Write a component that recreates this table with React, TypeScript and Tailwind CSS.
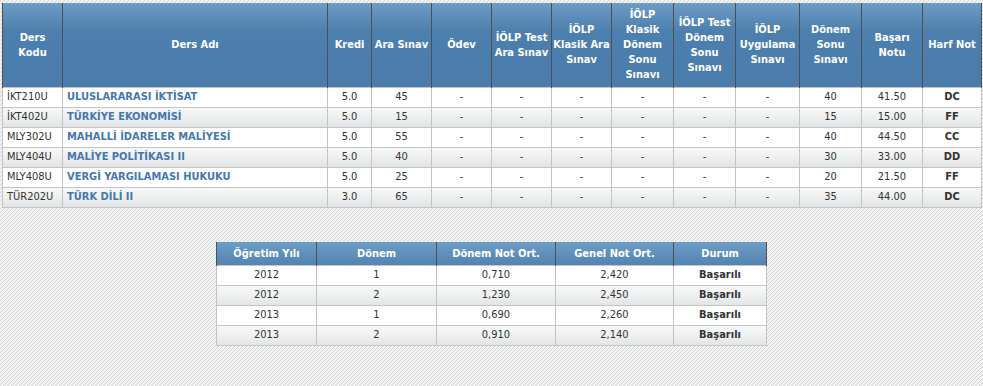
import React from 'react';

const courses = [
  ['İKT210U', 'ULUSLARARASI İKTİSAT', '5.0', '45', '40', '41.50', 'DC'],
  ['İKT402U', 'TÜRKİYE EKONOMİSİ', '5.0', '15', '15', '15.00', 'FF'],
  ['MLY302U', 'MAHALLİ İDARELER MALİYESİ', '5.0', '55', '40', '44.50', 'CC'],
  ['MLY404U', 'MALİYE POLİTİKASI II', '5.0', '40', '30', '33.00', 'DD'],
  ['MLY408U', 'VERGİ YARGILAMASI HUKUKU', '5.0', '25', '20', '21.50', 'FF'],
  ['TÜR202U', 'TÜRK DİLİ II', '3.0', '65', '35', '44.00', 'DC'],
];

const terms = [
  ['2012', '1', '0,710', '2,420'],
  ['2012', '2', '1,230', '2,450'],
  ['2013', '1', '0,690', '2,260'],
  ['2013', '2', '0,910', '2,140'],
];

const headers: { lines: string[]; w: string }[] = [
  { lines: ['Ders', 'Kodu'], w: 'w-[60px]' },
  { lines: ['Ders Adı'], w: 'w-[265px]' },
  { lines: ['Kredi'], w: 'w-[44px]' },
  { lines: ['Ara Sınav'], w: 'w-[60px]' },
  { lines: ['Ödev'], w: 'w-[60px]' },
  { lines: ['İÖLP Test', 'Ara Sınav'], w: 'w-[60px]' },
  { lines: ['İÖLP', 'Klasik Ara', 'Sınav'], w: 'w-[60px]' },
  { lines: ['İÖLP', 'Klasik', 'Dönem', 'Sonu', 'Sınavı'], w: 'w-[62px]' },
  { lines: ['İÖLP Test', 'Dönem', 'Sonu', 'Sınavı'], w: 'w-[62px]' },
  { lines: ['İÖLP', 'Uygulama', 'Sınavı'], w: 'w-[64px]' },
  { lines: ['Dönem', 'Sonu', 'Sınavı'], w: 'w-[62px]' },
  { lines: ['Başarı', 'Notu'], w: 'w-[61px]' },
  { lines: ['Harf Not'], w: 'w-[59px]' },
];

const headBg =
  'bg-[linear-gradient(to_bottom,#6d9ec6_0px,#5f90bb_12px,#4d7fae_28px,#4a7cac_100%)]';
const altBg = 'bg-[linear-gradient(to_bottom,#f8f8f8_0%,#eef0f0_50%,#e1e4e4_100%)]';
const th = 'border-x border-[#4f4f4f] text-white font-bold text-[11px] leading-[15px] text-center align-middle whitespace-nowrap p-0';
const td = 'border border-[#c4c4c4] h-[20px] p-0 text-[11px] text-[#333] align-middle whitespace-nowrap';

export default function App() {
  return (
    <div
      className="w-full h-[386px] overflow-hidden pt-[3px] px-[2px] bg-[#f3f3f3] bg-[linear-gradient(135deg,#d3d3d3_0%,#d3d3d3_18%,#f3f3f3_18%,#f3f3f3_50%,#d3d3d3_50%,#d3d3d3_68%,#f3f3f3_68%,#f3f3f3_100%)] bg-[length:4px_4px]"
      style={{ fontFamily: '"DejaVu Sans Condensed", "DejaVu Sans", sans-serif' }}
    >
      <table className="table-fixed border-collapse w-[979px]">
        <thead>
          <tr className={`${headBg} h-[84px]`}>
            {headers.map((h, i) => (
              <th key={i} className={`${th} ${h.w}`}>
                {h.lines.map((l, j) => (
                  <div key={j}>{l}</div>
                ))}
              </th>
            ))}
          </tr>
        </thead>
        <tbody>
          {courses.map((c, i) => (
            <tr key={i} className={i % 2 === 1 ? altBg : 'bg-white'}>
              <td className={`${td} pl-[4px]`}>{c[0]}</td>
              <td className={`${td} pl-[4px] font-bold text-[#4577ae]`}>{c[1]}</td>
              <td className={`${td} text-center`}>{c[2]}</td>
              <td className={`${td} text-center`}>{c[3]}</td>
              {[0, 1, 2, 3, 4, 5].map((k) => (
                <td key={k} className={`${td} text-center`}>-</td>
              ))}
              <td className={`${td} text-center`}>{c[4]}</td>
              <td className={`${td} text-center`}>{c[5]}</td>
              <td className={`${td} text-center font-bold`}>{c[6]}</td>
            </tr>
          ))}
        </tbody>
      </table>

      <div className="flex justify-center mt-[34px]">
        <table className="table-fixed border-collapse w-[550px]">
          <thead>
            <tr className={`${headBg} h-[24px]`}>
              <th className={`${th} w-[100px]`}>Öğretim Yılı</th>
              <th className={`${th} w-[120px]`}>Dönem</th>
              <th className={`${th} w-[119px]`}>Dönem Not Ort.</th>
              <th className={`${th} w-[118px]`}>Genel Not Ort.</th>
              <th className={`${th} w-[93px]`}>Durum</th>
            </tr>
          </thead>
          <tbody>
            {terms.map((t, i) => (
              <tr key={i} className={i % 2 === 1 ? altBg : 'bg-white'}>
                <td className={`${td} text-center`}>{t[0]}</td>
                <td className={`${td} text-center`}>{t[1]}</td>
                <td className={`${td} text-center`}>{t[2]}</td>
                <td className={`${td} text-center`}>{t[3]}</td>
                <td className={`${td} text-center font-semibold text-[#222]`}>Başarılı</td>
              </tr>
            ))}
          </tbody>
        </table>
      </div>
    </div>
  );
}
